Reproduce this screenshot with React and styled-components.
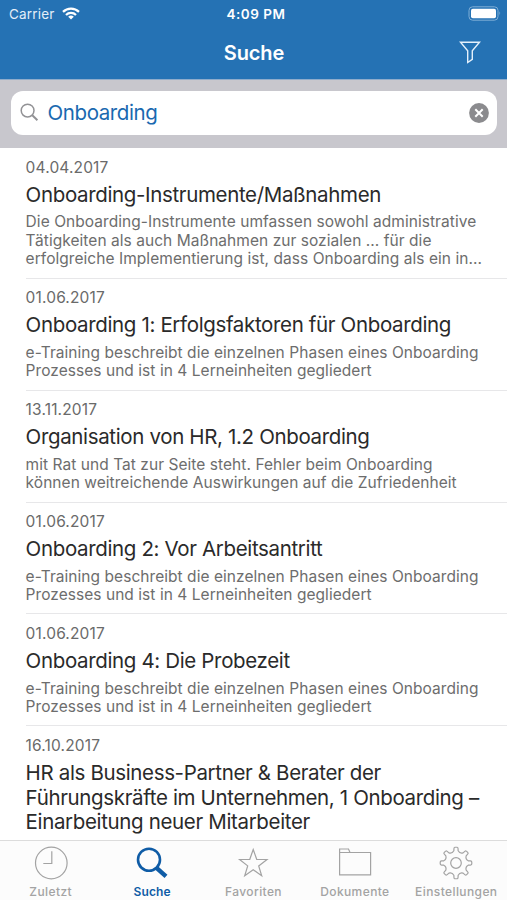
import styled, { createGlobalStyle } from "styled-components"

const results = [
    {
        date: "04.04.2017",
        title: ["Onboarding-Instrumente/Maßnahmen"],
        text: [
            "Die Onboarding-Instrumente umfassen sowohl administrative",
            "Tätigkeiten als auch Maßnahmen zur sozialen ... für die",
            "erfolgreiche Implementierung ist, dass Onboarding als ein in...",
        ],
    },
    {
        date: "01.06.2017",
        title: ["Onboarding 1: Erfolgsfaktoren für Onboarding"],
        text: [
            "e-Training beschreibt die einzelnen Phasen eines Onboarding",
            "Prozesses und ist in 4 Lerneinheiten gegliedert",
        ],
    },
    {
        date: "13.11.2017",
        title: ["Organisation von HR, 1.2 Onboarding"],
        text: [
            "mit Rat und Tat zur Seite steht. Fehler beim Onboarding",
            "können weitreichende Auswirkungen auf die Zufriedenheit",
        ],
    },
    {
        date: "01.06.2017",
        title: ["Onboarding 2: Vor Arbeitsantritt"],
        text: [
            "e-Training beschreibt die einzelnen Phasen eines Onboarding",
            "Prozesses und ist in 4 Lerneinheiten gegliedert",
        ],
    },
    {
        date: "01.06.2017",
        title: ["Onboarding 4: Die Probezeit"],
        text: [
            "e-Training beschreibt die einzelnen Phasen eines Onboarding",
            "Prozesses und ist in 4 Lerneinheiten gegliedert",
        ],
    },
    {
        date: "16.10.2017",
        title: [
            "HR als Business-Partner & Berater der",
            "Führungskräfte im Unternehmen, 1 Onboarding –",
            "Einarbeitung neuer Mitarbeiter",
        ],
        text: [],
    },
]

// outline of a cog wheel with 8 teeth around the origin
function gearPath(){
    const point = (r, deg) => {
        const a = (deg - 90) * Math.PI / 180
        return `${(r * Math.cos(a)).toFixed(2)} ${(r * Math.sin(a)).toFixed(2)}`
    }
    let d = ""
    for (let i = 0; i < 8; i++) {
        const c = i * 45
        d += `${i === 0 ? "M" : "L"}${point(12.4, c - 10)} L${point(14.6, c - 8)} Q${point(15.9, c - 7)} ${point(15.8, c - 4)} L${point(15.8, c + 4)} Q${point(15.9, c + 7)} ${point(14.6, c + 8)} L${point(12.4, c + 10)} Q${point(10, c + 22.5)} ${point(12.4, c + 35)} `
    }
    return d + "Z"
}

const icons = {
    clock: <><circle cx="17.3" cy="17" r="15.8" /><path d="M17.8 5.3V17.5H9.3" /></>,
    search: <><circle cx="14" cy="13.7" r="11" strokeWidth="2.6" /><path d="M21.5 21.8L31 30.3" strokeWidth="4.4" /></>,
    star: <path d="M17.2 3.5L20.7 13.3L31 13.5L22.7 19.9L25.7 29.7L17.2 23.8L8.7 29.7L11.7 19.9L3.6 13.5L13.8 13.3Z" />,
    folder: <path d="M1.6 28.9V3H10.5L12 6.5H32.6V28.9H1.6V6.5H12" />,
    gear: <g transform="translate(17 17)"><path d={gearPath()} strokeLinejoin="round" /><circle r="5.3" /></g>,
}

const tabs = [
    { icon: "clock", label: "Zuletzt" },
    { icon: "search", label: "Suche", active: true },
    { icon: "star", label: "Favoriten" },
    { icon: "folder", label: "Dokumente" },
    { icon: "gear", label: "Einstellungen" },
]

function App(){
    return (
        <>
            <GlobalStyle />
            <Screen>
                <Header>
                    <StatusBar>
                        <Carrier>
                            Carrier
                            <svg width="18" height="13" viewBox="0 0 18 13" fill="none" stroke="#fff" strokeWidth="2.2">
                                <path d="M1 4.9A11.3 11.3 0 0 1 17 4.9" />
                                <path d="M4 8A7 7 0 0 1 14 8" />
                                <path d="M9 12.6L6.2 9.8A4 4 0 0 1 11.8 9.8Z" fill="#fff" stroke="none" />
                            </svg>
                        </Carrier>
                        <Clock>4:09 PM</Clock>
                        <Battery>
                            <svg width="34" height="15" viewBox="0 0 34 15">
                                <rect x="1" y="0.8" width="29" height="13.4" rx="3.6" fill="none" stroke="#7faed6" strokeWidth="1" />
                                <rect x="3" y="2.8" width="25" height="9.4" rx="1.8" fill="#fff" />
                                <path d="M31.5 5.2Q33.2 7.4 31.5 9.6Z" fill="#8fb8dc" />
                            </svg>
                        </Battery>
                    </StatusBar>
                    <NavBar>
                        <NavTitle>Suche</NavTitle>
                        <FilterButton>
                            <svg width="22" height="24" viewBox="0 0 22 24" fill="none" stroke="#e4f0fb" strokeWidth="1.4">
                                <path d="M1.5 1.2H20.5L13.3 9.7V18.4L8.7 21.5V9.7Z" />
                            </svg>
                        </FilterButton>
                    </NavBar>
                </Header>
                <SearchArea>
                    <SearchField>
                        <svg width="20" height="20" viewBox="0 0 20 20" fill="none" stroke="#929295" strokeWidth="1.5">
                            <circle cx="7.6" cy="7.6" r="6.4" />
                            <path d="M12.3 12.3L17.4 17.2" strokeWidth="2" />
                        </svg>
                        <Query>Onboarding</Query>
                        <svg width="20" height="20" viewBox="0 0 20 20">
                            <circle cx="10" cy="10" r="9.9" fill="#8b8b8e" />
                            <path d="M6.3 6.3L13.7 13.7M13.7 6.3L6.3 13.7" stroke="#fff" strokeWidth="2" />
                        </svg>
                    </SearchField>
                </SearchArea>
                <Results>
                    {results.map((item, i) => (
                        <ResultItem key={i}>
                            <ResultDate>{item.date}</ResultDate>
                            <ResultTitle>{item.title.join("\n")}</ResultTitle>
                            <ResultText>{item.text.join("\n")}</ResultText>
                        </ResultItem>
                    ))}
                </Results>
                <TabBar>
                    {tabs.map(({ icon, label, active }) => (
                        <Tab key={label} $active={active}>
                            <svg width="34" height="34" viewBox="0 0 34 34" fill="none" stroke="currentColor" strokeWidth="1.2">
                                {icons[icon]}
                            </svg>
                            <TabLabel $active={active}>{label}</TabLabel>
                        </Tab>
                    ))}
                </TabBar>
            </Screen>
        </>
    )
}

const GlobalStyle = createGlobalStyle`
    *{
        box-sizing: border-box;
    }
    body{
        margin: 0;
        font-family: Inter, "Liberation Sans", sans-serif;
    }
    svg{
        display: block;
        flex-shrink: 0;
    }
`

const Screen = styled.div`
    width: 507px;
    height: 900px;
    display: flex;
    flex-direction: column;
    overflow: hidden;
    background: #fff;
`

const Header = styled.header`
    height: 80px;
    flex-shrink: 0;
    background: #2572b4;
    border-bottom: 1px solid #8faccb;
    color: #fff;
`

const StatusBar = styled.div`
    height: 27px;
    display: grid;
    grid-template-columns: 1fr auto 1fr;
    align-items: center;
    padding: 0 5px 0 8px;
    font-size: 13.5px;
`

const Carrier = styled.div`
    display: flex;
    align-items: center;
    gap: 7px;
    padding-left: 1px;
    color: #e3eef8;
    letter-spacing: .2px;
`

const Clock = styled.div`
    padding-left: 2px;
    font-weight: 600;
    letter-spacing: .5px;
`

const Battery = styled.div`
    justify-self: end;
`

const NavBar = styled.div`
    height: 52px;
    display: grid;
    grid-template-columns: 1fr auto 1fr;
    align-items: center;
    padding: 0 26px;
`

const NavTitle = styled.h1`
    grid-column: 2;
    margin: 0;
    padding-left: 1px;
    font-size: 20px;
    font-weight: 600;
    letter-spacing: -.1px;
`

const FilterButton = styled.div`
    justify-self: end;
`

const SearchArea = styled.div`
    height: 68px;
    flex-shrink: 0;
    padding: 11px 10px 0 11px;
    background: #c8c7cd;
`

const SearchField = styled.div`
    height: 44px;
    display: flex;
    align-items: center;
    padding: 0 8px 0 9px;
    border-radius: 12px;
    background: #fff;
`

const Query = styled.div`
    flex: 1;
    padding: 0 0 1px 7.5px;
    font-size: 20.5px;
    letter-spacing: -.4px;
    color: #1a69b0;
`

const Results = styled.div`
    flex: 1;
    min-height: 0;
    overflow: hidden;
`

const ResultItem = styled.div`
    margin-left: 25.6px;
    padding: 8.6px 0 8.6px;
    white-space: pre;
    border-bottom: 1px solid #e7e7e9;
`

const ResultDate = styled.div`
    line-height: 22px;
    font-size: 15.5px;
    letter-spacing: .15px;
    color: #6a6a6a;
`

const ResultTitle = styled.div`
    padding: 4px 0 6px;
    line-height: 24.6px;
    font-size: 20.5px;
    letter-spacing: -.35px;
    color: #2a2a2a;
`

const ResultText = styled.div`
    line-height: 18.6px;
    font-size: 15.5px;
    letter-spacing: .05px;
    color: #6d6d6d;
`

const TabBar = styled.nav`
    height: 60px;
    flex-shrink: 0;
    display: grid;
    grid-template-columns: repeat(5, 1fr);
    background: #fcfcfc;
    border-top: 1px solid #dcdcdc;
`

const Tab = styled.div`
    display: flex;
    flex-direction: column;
    align-items: center;
    padding-top: 5px;
    color: ${({ $active }) => ($active ? "#0f5ca6" : "#a3a3a3")};
`

const TabLabel = styled.span`
    margin-top: 4px;
    line-height: 16px;
    font-size: 12px;
    font-weight: ${({ $active }) => ($active ? 600 : 500)};
    letter-spacing: ${({ $active }) => ($active ? ".1px" : ".4px")};
`

export default App
